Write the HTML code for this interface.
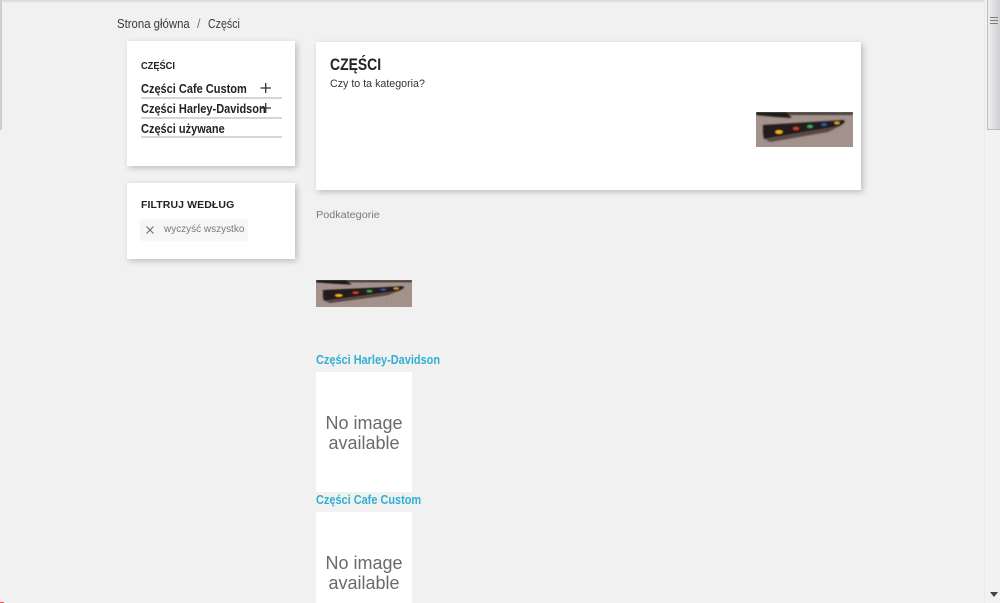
<!DOCTYPE html>
<html lang="pl"><head><meta charset="utf-8"><title>Części</title>
<style>
html,body{margin:0;padding:0}
body{width:1000px;height:603px;overflow:hidden;background:#f1f1f1;position:relative;font-family:"Liberation Sans","DejaVu Sans",sans-serif;color:#232323}
.t{position:absolute;white-space:nowrap;line-height:1;filter:blur(.3px);transform-origin:0 50%}
.box{position:absolute;background:#fff;box-shadow:2px 2px 6px rgba(0,0,0,.22)}
.ln{position:absolute;left:141px;width:141px;height:2px;background:#d6d6d6}
.b{font-weight:700}
.m{font-size:12.5px;transform:scaleX(.88)}
.blue{color:#2fb0d3;font-weight:700;font-size:12.5px;transform:scaleX(.875)}
.noimg{position:absolute;left:316px;width:96px;height:120px;background:#fff;overflow:hidden}
.noimg div{position:absolute;left:0;width:96px;text-align:center;color:#6a6a6a;font-size:18px;line-height:20px;top:41px;filter:blur(.3px)}
svg{position:absolute;display:block}
</style></head><body>
<div style="position:absolute;left:0;top:0;width:1000px;height:3px;background:linear-gradient(#d8d8d8,#efefef)"></div>
<div style="position:absolute;left:0;top:0;width:2px;height:130px;background:#cfcfcf"></div>

<div class="t" style="left:117px;top:18px;font-size:12.5px;color:#3a3a3a;transform:scaleX(.91)">Strona główna</div>
<div class="t" style="left:197px;top:18px;font-size:12.5px;color:#777">/</div>
<div class="t" style="left:208px;top:18px;font-size:12.5px;color:#3a3a3a;transform:scaleX(.85)">Części</div>

<div class="box" style="left:127px;top:41px;width:168px;height:125px"></div>
<div class="t b" style="left:141px;top:61px;font-size:10.5px;transform:scaleX(.88)">CZĘŚCI</div>
<div class="t b m" style="left:141px;top:83px">Części Cafe Custom</div>
<div class="t b m" style="left:141px;top:103px">Części Harley-Davidson</div>
<div class="t b m" style="left:141px;top:123px">Części używane</div>
<div class="ln" style="top:97px"></div>
<div class="ln" style="top:117px"></div>
<div class="ln" style="top:136px"></div>
<svg style="left:260px;top:82px" width="12" height="12"><path d="M0.5 6H11M5.7 1V11" stroke="#333" stroke-width="1.3" fill="none"/></svg>
<svg style="left:260px;top:102px" width="12" height="12"><path d="M0.5 6H11M5.7 1V11" stroke="#333" stroke-width="1.3" fill="none"/></svg>

<div class="box" style="left:127px;top:183px;width:168px;height:76px"></div>
<div class="t b" style="left:141px;top:200px;font-size:10.5px;letter-spacing:.1px">FILTRUJ WEDŁUG</div>
<div style="position:absolute;left:141px;top:220px;width:106px;height:20px;background:#f6f6f6;box-shadow:0 0 2px rgba(0,0,0,.12)"></div>
<svg style="left:145px;top:225px" width="10" height="10"><path d="M1.5 1.5L8.5 8.5M8.5 1.5L1.5 8.5" stroke="#666" stroke-width="1" fill="none"/></svg>
<div class="t" style="left:164px;top:224px;font-size:10.5px;color:#7a7a7a;transform:scaleX(.95)">wyczyść wszystko</div>

<div class="box" style="left:316px;top:42px;width:545px;height:148px"></div>
<div class="t b" style="left:330px;top:56px;font-size:17px;transform:scaleX(.82)">CZĘŚCI</div>
<div class="t" style="left:330px;top:79px;font-size:11px;color:#333;transform:scaleX(.97)">Czy to ta kategoria?</div>

<svg style="left:756px;top:112px" width="97" height="35" viewBox="0 0 97 35">
<defs><filter id="f1"><feGaussianBlur stdDeviation=".8"/></filter>
<filter id="n" x="0" y="0" width="100%" height="100%"><feTurbulence type="fractalNoise" baseFrequency=".45" numOctaves="2" seed="4"/><feColorMatrix values="0 0 0 0 .38 0 0 0 0 .3 0 0 0 0 .28 2 0 0 0 -.45"/></filter></defs>
<rect width="97" height="35" fill="#a08e86"/>
<rect width="97" height="35" filter="url(#n)"/>
<g filter="url(#f1)">
<rect y="0" width="97" height="3" fill="#4c423c"/>
<path d="M0 0H30L36 6L20 5L0 3Z" fill="#1e1a18"/>
<path d="M7 13L88 8L89 10L84 14L8 27L7 22Z" fill="#231b1c"/>
<path d="M9 27L84 14L72 20L14 30Z" fill="#574a45"/>
<ellipse cx="23" cy="20" rx="3.6" ry="1.7" fill="#ffb80c"/>
<ellipse cx="40" cy="16.5" rx="3" ry="1.5" fill="#ea3f18"/>
<ellipse cx="54" cy="14.5" rx="2.8" ry="1.4" fill="#30c058"/>
<ellipse cx="68" cy="12.5" rx="2.6" ry="1.1" fill="#3560c4"/>
<ellipse cx="81" cy="11" rx="2.6" ry="1.2" fill="#eca820"/>
</g></svg>

<div class="t" style="left:316px;top:210px;font-size:10.5px;color:#7a7a7a;transform:scaleX(1.03)">Podkategorie</div>

<svg style="left:316px;top:280px" width="96" height="27" viewBox="0 0 97 35" preserveAspectRatio="none">
<rect width="97" height="35" fill="#a08e86"/>
<rect width="97" height="35" filter="url(#n)"/>
<g filter="url(#f1)">
<rect y="0" width="97" height="3" fill="#4c423c"/>
<path d="M0 0H30L36 6L20 5L0 3Z" fill="#1e1a18"/>
<path d="M7 13L88 8L89 10L84 14L8 27L7 22Z" fill="#231b1c"/>
<path d="M9 27L84 14L72 20L14 30Z" fill="#574a45"/>
<ellipse cx="23" cy="20" rx="3.6" ry="1.7" fill="#ffb80c"/>
<ellipse cx="40" cy="16.5" rx="3" ry="1.5" fill="#ea3f18"/>
<ellipse cx="54" cy="14.5" rx="2.8" ry="1.4" fill="#30c058"/>
<ellipse cx="68" cy="12.5" rx="2.6" ry="1.1" fill="#3560c4"/>
<ellipse cx="81" cy="11" rx="2.6" ry="1.2" fill="#eca820"/>
</g></svg>

<div class="t blue" style="left:316px;top:354px">Części Harley-Davidson</div>
<div class="noimg" style="top:372px"><div style="top:41px">No image<br>available</div></div>
<div class="t blue" style="left:316px;top:494px">Części Cafe Custom</div>
<div class="noimg" style="top:512px;height:91px"><div style="top:41px">No image<br>available</div></div>

<div style="position:absolute;left:984px;top:0;width:16px;height:603px;background:#f2f2f2;border-left:1px solid #ebebeb;box-sizing:border-box"></div>
<div style="position:absolute;left:987px;top:0;width:13px;height:130px;background:linear-gradient(90deg,#eee,#cfcfd2);border-left:1px solid #bcbcbc;border-bottom:1px solid #bcbcbc;box-sizing:border-box"></div>
<svg style="left:990px;top:16px" width="8" height="10"><path d="M0 1.5H8M0 4.5H8M0 7.5H8" stroke="#7d7d7d" stroke-width="1"/></svg>
<svg style="left:990px;top:592px" width="8" height="5"><path d="M0 0H8L4 5Z" fill="#444"/></svg>
<div style="position:absolute;left:0;top:602px;width:4px;height:1px;background:#e2553a"></div>
</body></html>
